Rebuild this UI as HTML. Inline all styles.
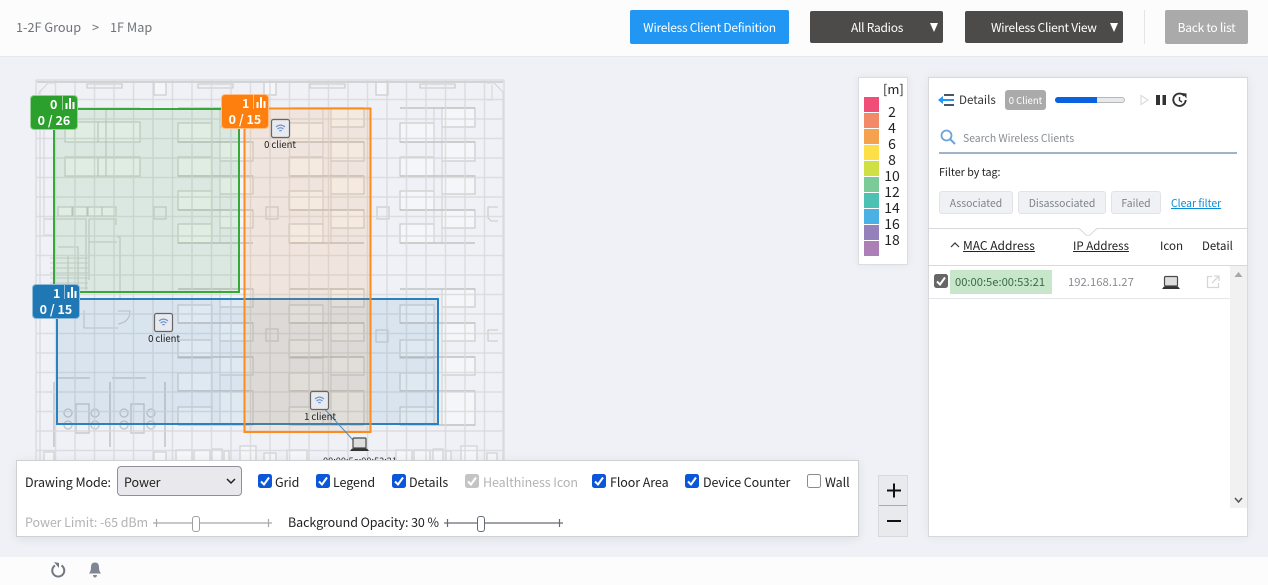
<!DOCTYPE html>
<html><head><meta charset="utf-8"><style>
*{box-sizing:border-box}
html,body{margin:0;padding:0}
body{width:1268px;height:585px;overflow:hidden;background:#eff1f6;position:relative;font-family:"Noto Sans CJK JP","Liberation Sans",sans-serif;font-size:12.5px;letter-spacing:-.08px;color:#222}
.a{position:absolute;white-space:nowrap}
.t{position:absolute;white-space:nowrap;line-height:16px}
.cb{position:absolute;width:14px;height:14px;border-radius:2.5px;background:#0a57d9}
.cb svg{position:absolute;left:0;top:0}
.btn{position:absolute;color:#fff;font-size:12px;letter-spacing:-.27px;text-align:center;line-height:36px;border-radius:2px}
.tag{position:absolute;top:191px;height:23px;line-height:22px;background:#eff1f5;border:1px solid #e1e3e8;border-radius:3px;color:#7d8289;font-size:10.4px;letter-spacing:0;text-align:center}
.sw{position:absolute;left:864px;width:15px;height:15px}
.n{position:absolute;left:879px;width:26px;text-align:center;font-size:14px;letter-spacing:0;line-height:16px;color:#222}
.b{position:absolute;width:48px;height:35px;border-radius:4px;color:#fff;font-weight:700;font-size:12.5px;letter-spacing:0;border:1px solid rgba(255,255,255,.5)}
</style></head><body>

<!-- top bar -->
<div class="a" style="left:0;top:0;width:1268px;height:57px;background:#fcfcfd;border-bottom:1px solid #e6e7ec"></div>
<div class="t" style="left:16px;top:19px;color:#6f7378;font-size:12.7px;letter-spacing:0">1-2F Group</div>
<div class="t" style="left:92px;top:19px;color:#6f7378;font-size:12.7px;letter-spacing:0">&gt;</div>
<div class="t" style="left:110px;top:19px;color:#6f7378;font-size:12.7px;letter-spacing:0">1F Map</div>
<div class="btn" style="left:630px;top:10px;width:159px;height:34px;background:#2196f3">Wireless Client Definition</div>
<div class="btn" style="left:810px;top:11px;width:133px;height:32px;background:#4d4b49;line-height:34px"><span style="position:absolute;left:41px">All Radios</span><span style="position:absolute;left:120px;top:12px;width:0;height:0;border-left:4px solid transparent;border-right:4px solid transparent;border-top:9px solid #fff"></span></div>
<div class="btn" style="left:965px;top:11px;width:158px;height:32px;background:#4d4b49;line-height:34px"><span style="position:absolute;left:26px">Wireless Client View</span><span style="position:absolute;left:145px;top:12px;width:0;height:0;border-left:4px solid transparent;border-right:4px solid transparent;border-top:9px solid #fff"></span></div>
<div class="a" style="left:1144px;top:10px;width:1px;height:34px;background:#e3e4e8"></div>
<div class="btn" style="left:1165px;top:10px;width:83px;height:34px;background:#aaa">Back to list</div>

<!-- map -->
<svg class="a" style="left:0;top:0" width="1268" height="585" viewBox="0 0 1268 585">
<defs>
<g id="u" fill="#f8f9fb" fill-opacity=".55" stroke="#c8c8c8" stroke-width="1.100">
<rect x="178" y="123" width="34" height="19"/><rect x="178" y="157" width="34" height="19"/><rect x="178" y="191" width="34" height="19"/><rect x="178" y="224" width="34" height="19"/>
<rect x="220" y="108" width="33" height="19"/><rect x="220" y="142" width="33" height="19"/><rect x="220" y="176" width="33" height="18"/><rect x="220" y="210" width="33" height="18"/>
<rect x="178" y="305" width="34" height="18"/><rect x="178" y="340" width="34" height="18"/><rect x="178" y="373" width="34" height="18"/><rect x="178" y="407" width="34" height="18"/>
<rect x="220" y="289" width="33" height="18"/><rect x="220" y="323" width="33" height="18"/><rect x="220" y="357" width="33" height="18"/><rect x="220" y="391" width="33" height="34"/>
<path d="M212 108V243M220 108V243M212 305V425M220 289V425" fill="none" stroke="#d4d4d4"/>
<path d="M178 108H253M178 142H253M178 176H253M178 210H253M178 243H253M178 289H253M178 323H253M178 357H253M178 391H253M178 425H253" fill="none" stroke="#c2c2c2" stroke-width="1.400"/>
</g>
<g id="gx" stroke="#d8d9dc" stroke-opacity=".85" stroke-width="1.500">
<path d="M36 80V470M55.500 80V470M75 80V470M94.500 80V470M114 80V470M133.500 80V470M153 80V470M172.500 80V470M192 80V470M211.500 80V470M231 80V470M250.500 80V470M270 80V470M289.500 80V470M309 80V470M328.500 80V470M348 80V470M367.500 80V470M387 80V470M406.500 80V470M426 80V470M445.500 80V470M465 80V470M484.500 80V470M504 80V470"/>
<path d="M36 80H504M36 99.500H504M36 119H504M36 138.500H504M36 158H504M36 177.500H504M36 197H504M36 216.500H504M36 236H504M36 255.500H504M36 275H504M36 294.500H504M36 314H504M36 333.500H504M36 353H504M36 372.500H504M36 392H504M36 411.500H504M36 431H504M36 450.500H504"/>
</g>
</defs>
<use href="#u"/>
<use href="#u" x="111"/>
<use href="#u" x="222"/>
<!-- left rooms -->
<g fill="#f8f9fb" fill-opacity=".55" stroke="#c8c8c8" stroke-width="1.100">
<rect x="65" y="122" width="33" height="20"/><rect x="65" y="157" width="33" height="19"/>
<rect x="98" y="122" width="42" height="20"/><rect x="98" y="157" width="42" height="19"/>
<path d="M65 108H140M106 108V176M65 142H140M65 176H140" fill="none"/>
<rect x="58" y="207" width="14" height="9"/><rect x="73" y="207" width="14" height="9"/><rect x="88" y="207" width="14" height="9"/><rect x="102" y="207" width="14" height="9"/>
<path d="M44 219H86V290M89 219H116V225M89 219V280M89 242H117M117 237H120V300M58 247H78V290M68 256V290" fill="none"/>
<path d="M50 258H88M50 263H88M50 268H88M50 273H88M50 278H88M50 283H88M50 288H88" fill="none" stroke="#d0d0d0" stroke-width="1"/>
<path d="M84 310V328H118M118 311H130Q130 322 118 324" fill="none"/>
<rect x="154" y="207" width="12" height="12" fill="none"/><rect x="266" y="207" width="12" height="12" fill="none"/><rect x="377" y="207" width="12" height="12" fill="none"/>
<rect x="266" y="329" width="12" height="12" fill="none"/><rect x="376" y="330" width="12" height="12" fill="none"/>
<path d="M498 207H488V218L491 221H498M498 330H488V341H498" fill="none"/>
<rect x="154" y="82" width="12" height="13"/><rect x="264" y="82" width="12" height="13"/><rect x="376" y="82" width="12" height="13"/>
<path d="M87 84H122V88H87ZM198 84H233V88H198ZM310 84H345V88H310ZM420 84H455V88H420Z" fill="none"/>
</g>
<!-- meeting rooms -->
<g fill="none" stroke="#c2c3c6" stroke-width="1.300">
<circle cx="68" cy="413" r="4"/><circle cx="68" cy="425" r="4"/><circle cx="95" cy="413" r="4"/><circle cx="95" cy="425" r="4"/>
<circle cx="124" cy="413" r="4"/><circle cx="124" cy="425" r="4"/><circle cx="151" cy="413" r="4"/><circle cx="151" cy="425" r="4"/>
<rect x="76" y="404" width="13" height="29"/><rect x="131" y="404" width="13" height="29"/>
<path d="M57 378H90M112 378H146"/>
<path d="M54 382V447M110 382V447M165 382V447" stroke-width="1.500"/>
</g>
<!-- bottom row -->
<g fill="#f5f6f8" stroke="#cfd0d3" stroke-width="1.200">
<rect x="44" y="452" width="10" height="10"/><rect x="154" y="452" width="12" height="10"/><rect x="176" y="450" width="16" height="12"/><rect x="194" y="450" width="16" height="12"/><rect x="212" y="449" width="10" height="13"/><rect x="224" y="451" width="5" height="10"/><rect x="240" y="446" width="16" height="16"/><rect x="264" y="453" width="12" height="10"/><rect x="287" y="450" width="20" height="12"/>
<rect x="396" y="450" width="16" height="12"/><rect x="414" y="450" width="16" height="12"/><rect x="433" y="449" width="10" height="13"/><rect x="446" y="451" width="5" height="10"/><rect x="461" y="446" width="16" height="16"/><rect x="487" y="453" width="10" height="10"/>
</g>
<use href="#gx"/>
<path d="M37 82H503" stroke="#d2d3d6" stroke-width="2"/>
<path d="M38 94 L48 83H55M487 83H494L503 92V470M40 90V470M44 96V235H52M492 85V100H487" fill="none" stroke="#d8d9dc" stroke-width="1.300"/>
<!-- coverage -->
<rect x="54" y="109" width="185" height="183" fill="#2ca02c" fill-opacity=".1" stroke="#35a838" stroke-width="2"/>
<rect x="57" y="299" width="381" height="125" fill="#1f77b4" fill-opacity=".1" stroke="#2b80bd" stroke-width="2"/>
<rect x="244.500" y="108.500" width="126" height="323.500" fill="#ff7f0e" fill-opacity=".1" stroke="#fb8c22" stroke-width="2"/>
<path d="M320 404L353 440" stroke="#4a90c2" stroke-width="1"/>
<!-- AP icons -->
<g><rect x="271.500" y="119.500" width="18" height="18" rx="2" fill="#e8eaee" stroke="#666" stroke-width="1.200"/>
<path d="M276 127q4.500-3.800 9 0M277.500 129q3-2.500 6 0M279.300 131q1.200-1 2.400 0" fill="none" stroke="#6e95d6" stroke-width="1.200"/></g>
<g><rect x="154.500" y="313.500" width="18" height="18" rx="2" fill="#e8eaee" stroke="#666" stroke-width="1.200"/>
<path d="M159 321q4.500-3.800 9 0M160.500 323q3-2.500 6 0M162.300 325q1.200-1 2.400 0" fill="none" stroke="#6e95d6" stroke-width="1.200"/></g>
<g><rect x="310.500" y="391.500" width="18" height="18" rx="2" fill="#e8eaee" stroke="#666" stroke-width="1.200"/>
<path d="M315 399q4.500-3.800 9 0M316.500 401q3-2.500 6 0M318.300 403q1.200-1 2.400 0" fill="none" stroke="#6e95d6" stroke-width="1.200"/></g>
<!-- laptop -->
<rect x="353" y="438" width="13" height="10" rx="1" fill="#ddd" stroke="#4a4a4a" stroke-width="1.200"/>
<path d="M350 451L352 448.500H367L369 451Z" fill="#333"/>
</svg>
<div class="t" style="left:250px;top:136px;width:60px;text-align:center;font-size:9.5px;letter-spacing:-.05px;color:#222">0 client</div>
<div class="t" style="left:134px;top:330px;width:60px;text-align:center;font-size:9.5px;letter-spacing:-.05px;color:#222">0 client</div>
<div class="t" style="left:290px;top:408px;width:60px;text-align:center;font-size:9.5px;letter-spacing:-.05px;color:#222">1 client</div>
<div class="t" style="left:320px;top:452px;width:80px;text-align:center;font-size:9.2px;letter-spacing:0;color:#333">00:00:5e:00:53:21</div>

<!-- badges -->
<div class="b" style="left:30px;top:95px;background:#2ca02c">
<span class="t" style="left:19px;top:-1px;line-height:17px">0</span>
<span class="t" style="left:0;width:46px;text-align:center;top:15px;line-height:17px">0 / 26</span>
<svg class="a" style="left:31px;top:0" width="15" height="15"><path d="M0.500 0V14" stroke="#ffffff" stroke-opacity=".5"/><path d="M3.500 7h2v6h-2zM7 2h2v11H7zM10.500 6h2v7h-2z" fill="#fff"/></svg>
</div>
<div class="b" style="left:221px;top:94px;background:#ff7f0e">
<span class="t" style="left:20px;top:-1px;line-height:17px">1</span>
<span class="t" style="left:0;width:46px;text-align:center;top:15px;line-height:17px">0 / 15</span>
<svg class="a" style="left:31px;top:0" width="15" height="15"><path d="M0.500 0V14" stroke="#ffffff" stroke-opacity=".5"/><path d="M3.500 7h2v6h-2zM7 2h2v11H7zM10.500 6h2v7h-2z" fill="#fff"/></svg>
</div>
<div class="b" style="left:32px;top:284px;background:#1f77b4">
<span class="t" style="left:20px;top:-1px;line-height:17px">1</span>
<span class="t" style="left:0;width:46px;text-align:center;top:15px;line-height:17px">0 / 15</span>
<svg class="a" style="left:31px;top:0" width="15" height="15"><path d="M0.500 0V14" stroke="#ffffff" stroke-opacity=".5"/><path d="M3.500 7h2v6h-2zM7 2h2v11H7zM10.500 6h2v7h-2z" fill="#fff"/></svg>
</div>

<!-- legend -->
<div class="a" style="left:858px;top:77px;width:50px;height:188px;background:#fff;border:1px solid #dcdde1;box-shadow:0 0 8px rgba(0,0,0,.06)"></div>
<div class="t" style="left:883px;top:81px;font-size:13px;letter-spacing:0">[m]</div>
<div class="sw" style="top:97px;background:#f04e77"></div><div class="n" style="top:104px">2</div>
<div class="sw" style="top:113px;background:#f28969"></div><div class="n" style="top:120px">4</div>
<div class="sw" style="top:129px;background:#f5a24e"></div><div class="n" style="top:136px">6</div>
<div class="sw" style="top:145px;background:#fde047"></div><div class="n" style="top:152px">8</div>
<div class="sw" style="top:161px;background:#cfe044"></div><div class="n" style="top:168px">10</div>
<div class="sw" style="top:177px;background:#7acb97"></div><div class="n" style="top:184px">12</div>
<div class="sw" style="top:193px;background:#4dc0b4"></div><div class="n" style="top:200px">14</div>
<div class="sw" style="top:209px;background:#4bb0e3"></div><div class="n" style="top:216px">16</div>
<div class="sw" style="top:225px;background:#9480bb"></div><div class="n" style="top:232px">18</div>
<div class="sw" style="top:241px;background:#ac7fb7"></div>

<!-- bottom panel -->
<div class="a" style="left:16px;top:460px;width:843px;height:77px;background:#fff;border:1px solid #cfd0d4;box-shadow:0 2px 10px rgba(0,0,0,.08)"></div>
<div class="t" style="left:25px;top:474px">Drawing Mode:</div>
<div class="a" style="left:117px;top:466px;width:125px;height:30px;background:#e9e9ed;border:1px solid #8f8f9d;border-radius:4px;line-height:29px;padding-left:6px;font-size:12.5px">Power
<svg class="a" style="left:108px;top:11px" width="10" height="7"><path d="M1 1L5 5L9 1" fill="none" stroke="#222" stroke-width="1.500"/></svg></div>
<div class="cb" style="left:258px;top:474px"><svg width="14" height="14"><path d="M3 7.500L6 10.500L11 3.500" fill="none" stroke="#fff" stroke-width="2"/></svg></div><div class="t" style="left:275px;top:474px">Grid</div>
<div class="cb" style="left:316px;top:474px"><svg width="14" height="14"><path d="M3 7.500L6 10.500L11 3.500" fill="none" stroke="#fff" stroke-width="2"/></svg></div><div class="t" style="left:333px;top:474px">Legend</div>
<div class="cb" style="left:392px;top:474px"><svg width="14" height="14"><path d="M3 7.500L6 10.500L11 3.500" fill="none" stroke="#fff" stroke-width="2"/></svg></div><div class="t" style="left:409px;top:474px">Details</div>
<div class="cb" style="left:465px;top:474px;background:#c4c4c6"><svg width="14" height="14"><path d="M3 7.500L6 10.500L11 3.500" fill="none" stroke="#fff" stroke-width="2"/></svg></div><div class="t" style="left:483px;top:474px;color:#b3b3b3">Healthiness Icon</div>
<div class="cb" style="left:592px;top:474px"><svg width="14" height="14"><path d="M3 7.500L6 10.500L11 3.500" fill="none" stroke="#fff" stroke-width="2"/></svg></div><div class="t" style="left:610px;top:474px">Floor Area</div>
<div class="cb" style="left:685px;top:474px"><svg width="14" height="14"><path d="M3 7.500L6 10.500L11 3.500" fill="none" stroke="#fff" stroke-width="2"/></svg></div><div class="t" style="left:703px;top:474px">Device Counter</div>
<div class="cb" style="left:807px;top:474px;background:#fff;border:1px solid #8a8a8f"></div><div class="t" style="left:825px;top:474px">Wall</div>
<div class="t" style="left:25px;top:514px;color:#b3b3b3">Power Limit: -65 dBm</div>
<div class="t" style="left:288px;top:514px">Background Opacity: 30 %</div>
<svg class="a" style="left:0;top:510px" width="600" height="28">
<path d="M153 13H272M156.500 9V17M268.500 9V17" stroke="#a8a8a8" stroke-width="1.200" fill="none"/>
<rect x="192.500" y="6.500" width="7" height="15" rx="2.500" fill="#fff" stroke="#a0a0a0"/>
<path d="M444 13H563M447.500 9V17M559.500 9V17" stroke="#666a75" stroke-width="1.200" fill="none"/>
<rect x="477.500" y="6.500" width="7" height="15" rx="2.500" fill="#fff" stroke="#666a75"/>
</svg>

<!-- zoom -->
<div class="a" style="left:878px;top:475px;width:30px;height:62px;background:#e9eaee;border:1px solid #d8d9dd"></div>
<div class="a" style="left:879px;top:505px;width:28px;height:1px;background:#a8a9ad"></div>
<svg class="a" style="left:878px;top:475px" width="30" height="62"><path d="M9 15.500H23M16 8.500V22.500M9 46H23" stroke="#111" stroke-width="2" fill="none"/></svg>

<!-- right panel -->
<div class="a" style="left:928px;top:77px;width:320px;height:460px;background:#fff;border:1px solid #d8d9dd;box-shadow:0 0 10px rgba(0,0,0,.06)"></div>
<svg class="a" style="left:938px;top:92px" width="18" height="16"><path d="M6 3H16M6 13H16" stroke="#4b5563" stroke-width="2" fill="none"/><path d="M0 8L5 4V12Z" fill="#2196f3"/><path d="M2 8H16" stroke="#2196f3" stroke-width="2"/></svg>
<div class="t" style="left:959px;top:92px;font-size:11.6px;letter-spacing:0;color:#333">Details</div>
<div class="a" style="left:1005px;top:90px;width:41px;height:20px;background:#aaa;border-radius:3px;color:#fff;font-size:9.5px;letter-spacing:0;line-height:20px;text-align:center">0 Client</div>
<div class="a" style="left:1055px;top:97px;width:70px;height:6px;background:#e8e9ed;border:1px solid #b5b7bd;border-radius:3px"></div>
<div class="a" style="left:1055px;top:97px;width:42px;height:6px;background:#0a62e0;border-radius:3px 0 0 3px"></div>
<svg class="a" style="left:1138px;top:92px" width="52" height="16"><path d="M3 3.500L10 8L3 12.500Z" fill="#fff" stroke="#dcdcdc" stroke-width="1.200"/><path d="M18 3H22V13H18ZM24.500 3H28V13H24.500Z" fill="#333"/><path d="M46.300 3.800A6.200 6.200 0 1 0 47.700 8" fill="none" stroke="#333" stroke-width="1.900"/><path d="M41.500 5V8.500L44 10" fill="none" stroke="#333" stroke-width="1.400"/><path d="M44 1L48.500 1.500V6.500Z" fill="#333"/></svg>
<svg class="a" style="left:940px;top:129px" width="16" height="16"><circle cx="6.500" cy="6.500" r="5" fill="none" stroke="#6ea3da" stroke-width="1.800"/><path d="M10 10L15 15" stroke="#6ea3da" stroke-width="2"/></svg>
<div class="t" style="left:963px;top:130px;font-size:10.4px;letter-spacing:0;color:#868b91">Search Wireless Clients</div>
<div class="a" style="left:939px;top:152px;width:298px;height:2px;background:#a0b4c6"></div>
<div class="t" style="left:939px;top:165px;font-size:10.7px;letter-spacing:0;color:#222">Filter by tag:</div>
<div class="tag" style="left:939px;width:74px">Associated</div>
<div class="tag" style="left:1018px;width:88px">Disassociated</div>
<div class="tag" style="left:1111px;width:50px">Failed</div>
<div class="t" style="left:1171px;top:195px;font-size:10.4px;letter-spacing:0;color:#0a8bd8;text-decoration:underline">Clear filter</div>
<svg class="a" style="left:929px;top:222px" width="318" height="14"><path d="M0 6.500H150L159 14.500L168 6.500H318" fill="#fff" stroke="#d8d9dc"/></svg>
<svg class="a" style="left:950px;top:241px" width="10" height="8"><path d="M1 6L5 2L9 6" fill="none" stroke="#333" stroke-width="1.200"/></svg>
<div class="t" style="left:963px;top:238px;font-size:12px;letter-spacing:0;text-decoration:underline;color:#222">MAC Address</div>
<div class="t" style="left:1073px;top:238px;font-size:11.5px;letter-spacing:0;text-decoration:underline;color:#222">IP Address</div>
<div class="t" style="left:1160px;top:238px;font-size:11.6px;letter-spacing:0;color:#222">Icon</div>
<div class="t" style="left:1202px;top:238px;font-size:11.4px;letter-spacing:0;color:#222">Detail</div>
<div class="a" style="left:929px;top:265px;width:318px;height:1px;background:#d8d9dc"></div>
<div class="cb" style="left:934px;top:274px;background:#666"><svg width="14" height="14"><path d="M3 7.500L6 10.500L11 3.500" fill="none" stroke="#fff" stroke-width="2"/></svg></div>
<div class="a" style="left:950px;top:270px;width:102px;height:24px;background:#c8e6c9"></div>
<div class="t" style="left:955px;top:274px;color:#3a6b45;font-size:11.2px;letter-spacing:0">00:00:5e:00:53:21</div>
<div class="t" style="left:1068px;top:274px;font-size:11.3px;letter-spacing:0;color:#8a8d92">192.168.1.27</div>
<svg class="a" style="left:1162px;top:275px" width="18" height="15"><rect x="2.500" y="1.500" width="13" height="9.500" rx="1" fill="#ddd" stroke="#4a4a4a" stroke-width="1.200"/><path d="M0 14L2 11.500H16L18 14Z" fill="#333"/></svg>
<svg class="a" style="left:1206px;top:275px" width="14" height="14"><path d="M6 1.500H1.500V12.500H12.500V8M8 1H13V6M13 1L6 8" fill="none" stroke="#d6d6d6" stroke-width="1.300"/></svg>
<div class="a" style="left:929px;top:298px;width:301px;height:1px;background:#e6e7ea"></div>
<div class="a" style="left:1230px;top:266px;width:17px;height:242px;background:#f1f1f1"></div>
<svg class="a" style="left:1230px;top:266px" width="17" height="242"><path d="M4.500 11L8.500 6L12.500 11Z" fill="#a8a8a8"/><path d="M5 232L8.500 236L12 232" fill="none" stroke="#555" stroke-width="1.500"/></svg>

<!-- footer -->
<div class="a" style="left:0;top:557px;width:1268px;height:28px;background:#fcfcfd"></div>
<svg class="a" style="left:49px;top:561px" width="54" height="18"><path d="M12.500 4.500A6 6 0 1 1 6 4.500" fill="none" stroke="#6f7684" stroke-width="2"/><path d="M5 1L10 2V7Z" fill="#6f7684"/><path d="M46 1.500c-3 0-4 2-4 5 0 3-1 4.500-2 6h12c-1-1.500-2-3-2-6 0-3-1-5-4-5ZM44 14h4c0 1.500-1 2.500-2 2.500s-2-1-2-2.500Z" fill="#7f8694"/></svg>
</body></html>
